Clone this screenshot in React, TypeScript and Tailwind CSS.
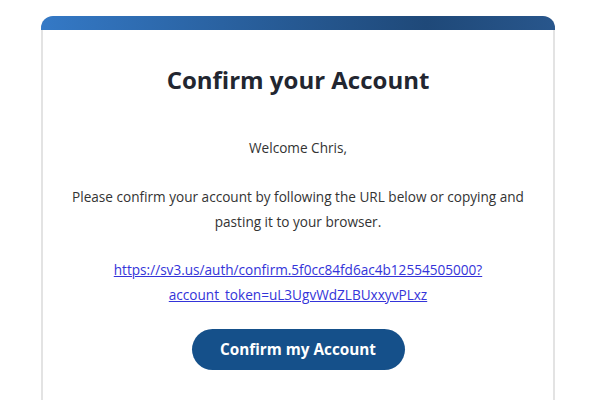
import React from "react";

const App = () => {
  return (
    <div
      className="w-[600px] h-[400px] bg-white overflow-hidden"
      style={{ fontFamily: '"Open Sans", "Liberation Sans", sans-serif' }}
    >
      <div className="ml-[41px] mt-[16px] w-[514px] h-[400px] border-x-2 border-[#e3e3e3] rounded-t-[12px]">
        <div className="-mx-[2px] h-[14px] rounded-t-[12px] bg-gradient-to-r from-[#3479c6] via-[#1f4979] via-75% to-[#28568c]" />

        <div className="px-[24px] text-center text-[#333333]">
          <h1 className="mt-[35px] text-[24px] leading-[30px] font-bold text-[#222630]">
            Confirm your Account
          </h1>

          <p className="mt-[40px] text-[13.6px] leading-[25px]">Welcome Chris,</p>

          <p className="mt-[24px] text-[13.6px] leading-[25px]">
            Please confirm your account by following the URL below or copying and pasting it to your browser.
          </p>

          <p className="mt-[23px] text-[13.6px] leading-[25px]">
            <a href="#" className="text-[#3434d9] underline">
              https://sv3.us/auth/confirm.5f0cc84fd6ac4b12554505000?
              <br />
              account_token=uL3UgvWdZLBUxxyvPLxz
            </a>
          </p>

          <div className="mt-[22px] flex justify-center">
            <button
              type="button"
              className="h-[41px] w-[213px] rounded-full bg-[#15508a] text-white text-[15.3px] font-bold"
            >
              Confirm my Account
            </button>
          </div>
        </div>
      </div>
    </div>
  );
};

export default App;
